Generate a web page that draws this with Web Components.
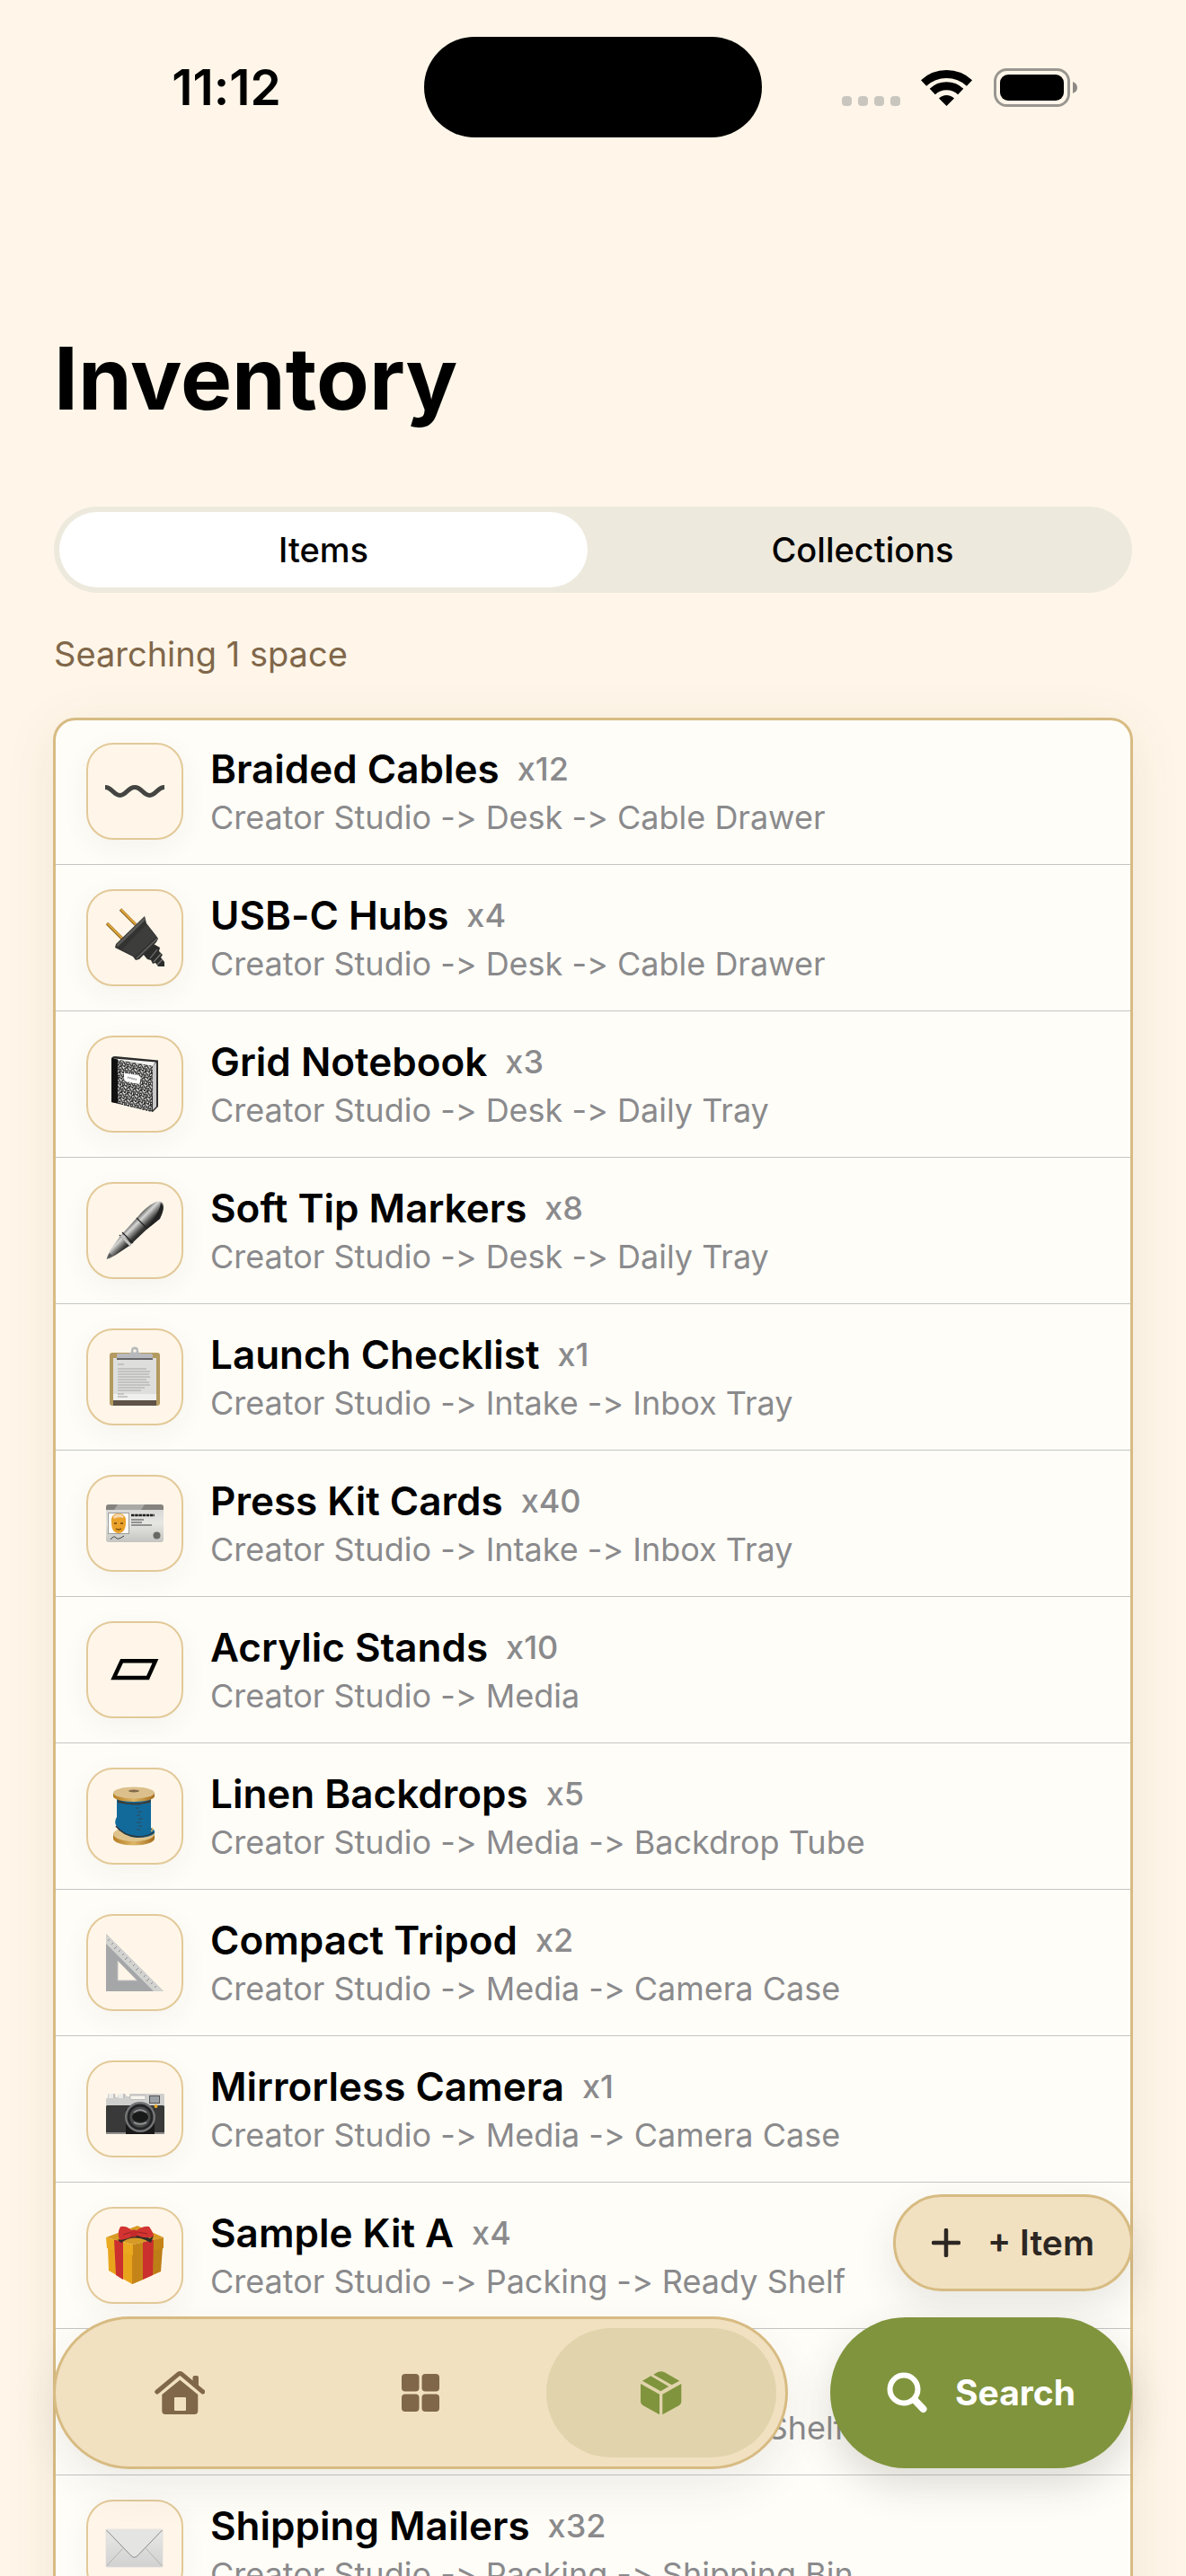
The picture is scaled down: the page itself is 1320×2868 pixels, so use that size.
<!DOCTYPE html>
<html lang="en">
<head>
<meta charset="utf-8">
<meta name="viewport" content="width=device-width, initial-scale=1">
<title>Inventory</title>
<style>
  :root {
    --bg: #fff6e9;
    --card: #fffdf8;
    --line: #d7bb82;
    --sand: #f1e1c1;
    --brown: #80674a;
    --green: #80943d;
    --muted: #8a8a8c;
    --hairline: #c5c5c3;
  }
  html, body { height: 100%; margin: 0; }
  body {
    overflow: hidden;
    background: var(--bg);
    color: #000;
    font-family: Inter, "Liberation Sans", sans-serif;
    font-variant-ligatures: no-contextual;
    font-feature-settings: "calt" 0;
  }
</style>
</head>
<body>
<inventory-app></inventory-app>

<script>
const define = (name, html, setup) => {
  const template = document.createElement('template');
  template.innerHTML = html;
  customElements.define(name, class extends HTMLElement {
    connectedCallback() {
      if (this.shadowRoot) return;
      this.attachShadow({ mode: 'open' }).append(template.content.cloneNode(true));
      if (setup) setup(this, this.shadowRoot);
    }
  });
};

/* ---------- item pictures, all on a 66 x 66 grid ---------- */
const ART = {
  wave: `<path d="M0 28.5C8 28.5 9 37.5 16.5 37.5S25 28.5 33 28.5S42 37.5 49.5 37.5S58 28.5 66 28.5" fill="none" stroke="#444542" stroke-width="5"/>`,
  plug: `<path d="M17 1.500L34 18.500M2 17L19 34" stroke="#8a6420" stroke-width="3.400"/>
    <path d="M17.500 1.500L34 18M2.500 17L19 33.500" stroke="#e3a93a" stroke-width="1.800"/>
    <path d="M54 40L61 44L60 48L64 52L62 55L66 60L66 65L59 65L56 61L53 62L51 58L47 57L42 51Z" fill="#2c2c2b"/>
    <path d="M50 56L58 46M54 60L62 51M58 63L64 57" stroke="#77777a" stroke-width="1.200"/>
    <path d="M44 9L46 17L57 31L59 34L57 38L38 57L34 58L31 54L17 47L11 44L12 40Z" fill="#333332"/>
    <path d="M44 10L12.500 41L14 43L45 13Z" fill="#5a5a58"/>
    <path d="M46 18L57 32L33 54L19 46Z" fill="#3d3d3b"/>
    <path d="M58 34L35 56" stroke="#686866" stroke-width="1.200"/>`,
  notebook: `<defs><pattern id="sp" width="7" height="7" patternUnits="userSpaceOnUse" patternTransform="rotate(13)"><rect width="7" height="7" fill="#2d2d2d"/><path d="M0 1h2v1h1v1h-2zM4 0h1v2h-1zM5 3h2v1h-1v1h-1zM1 5h1v1h1v1h-2zM3 4h1v1h-1zM6 6h1v1h-1zM2 3h1v1h-1zM3 2h1v1h-1zM4 6h1v1h-1zM0 4h1v1h-1z" fill="#e6e6e4"/></pattern></defs>
    <path d="M7 4Q8 2 11 2L59 6.500V58L53 64L7 53Z" fill="#2b2b2b"/>
    <path d="M10 4.500L56 8.500L53 13L10 5.500Z" fill="#f2f2f0"/>
    <path d="M53 13L57 8.500V58L53 62Z" fill="#c9c9ca"/>
    <path d="M13 5.500L53 13L52 64L13 54.500Z" fill="url(#sp)"/>
    <path d="M7 4L14 5.500V54.500L7 53Z" fill="#111"/>
    <path d="M21 20.500L37 23Q39 24 39 26V31Q38 33 36 32.500L23 30Q21 29 21 27Z" fill="#fff"/>
    <path d="M25 25.500L35 28" stroke="#999" stroke-width="2" stroke-dasharray="1.500 .7"/>`,
  pen: `<defs><linearGradient id="pg" gradientUnits="userSpaceOnUse" x1="24" y1="28" x2="38" y2="42"><stop offset="0" stop-color="#4a4a49"/><stop offset=".3" stop-color="#d9d9d8"/><stop offset=".5" stop-color="#8c8c8b"/><stop offset=".75" stop-color="#363635"/><stop offset="1" stop-color="#222"/></linearGradient></defs>
    <path d="M1.500 65L3 60L6 54L17 39L37 17C46 6 56 0 61 .5C67 2 66 10 61 20L46 32L27 50L12 60L5 64Z" fill="url(#pg)"/>
    <path d="M62 2C66 6 64 13 60 19C56 24 52 27 46 31C52 23 61 12 62 2Z" fill="#222"/>
    <path d="M16 38L28 50M19 35L31 47M35 19L47 31" stroke="#222" stroke-width="1.200"/>
    <path d="M17.500 38.500L28.500 49.500" stroke="#c4c4c3" stroke-width="3"/>
    <path d="M2 64L5 58L8 61Z" fill="#555"/>`,
  clipboard: `<rect x="5" y="6" width="56" height="59" rx="3" fill="#b39a60"/>
    <rect x="9" y="59" width="48" height="6" fill="#5f5347"/>
    <rect x="9" y="12" width="48" height="47" fill="#dededc"/>
    <path d="M9 52H57V59H9Z" fill="#efefed"/>
    <path d="M14 19H21M14 24H46M14 27H50M14 30H49M14 33H50M14 36H46M14 39H49M14 42H50M14 45H44M14 48H40M14 52H21M14 55H25" stroke="#b9b9b8" stroke-width="1.300"/>
    <path d="M13 8Q13 7 15 7H26Q29 6 29 3.500A4 4 0 0 1 37 3.500Q37 6 40 7H51Q53 7 53 9V14H13Z" fill="#b8b9bc"/>
    <path d="M13 12H53V14H13Z" fill="#66666a"/><circle cx="33" cy="4" r="1.800" fill="#fff6e9"/>`,
  idcard: `<defs><linearGradient id="ig" x2="0" y2="1"><stop offset="0" stop-color="#d3d3d1"/><stop offset=".5" stop-color="#e6e6e3"/><stop offset="1" stop-color="#c4c4c1"/></linearGradient></defs>
    <rect x="1" y="12" width="64" height="42" rx="3" fill="url(#ig)"/>
    <path d="M1 18V15Q1 12 4 12H62Q65 12 65 15V18Z" fill="#85837f"/><path d="M14 12H44L40 18H10Z" fill="#aaa9a6"/>
    <rect x="3.500" y="21.500" width="23" height="23" fill="#fff" stroke="#9b9b98"/>
    <path d="M7 32C6 25 10 22 15 22S24 25 23 32C23 40 20 44 15 44S7 40 7 32Z" fill="#eaa22b"/>
    <path d="M9 25Q15 20 21 25L20 27Q15 25 10 28Z" fill="#f5d6ae"/>
    <path d="M10 33H13M17 33H20M12 39Q15 41 18 39" stroke="#6d430e" stroke-width="1.500" fill="none"/>
    <path d="M29 24H55" stroke="#1f1f1f" stroke-width="2.600" stroke-dasharray="3.500 .7"/>
    <path d="M29 29H43M29 32H41M29 35H52" stroke="#777" stroke-width="1.300"/>
    <path d="M6 51Q10 46 12 49T21 47" fill="none" stroke="#444" stroke-width="1"/><circle cx="57.500" cy="46.500" r="4" fill="#686865"/>`,
  stand: `<path d="M18.500 23.200H56L47.500 42H9.700Z" fill="none" stroke="#000" stroke-width="4.400"/>`,
  spool: `<defs><linearGradient id="wd"><stop offset="0" stop-color="#b67c22"/><stop offset=".5" stop-color="#ddb667"/><stop offset="1" stop-color="#a66c1b"/></linearGradient></defs>
    <path d="M9 52V58C9 62 19 65.500 32 65.500S55 62 55 58V52Z" fill="url(#wd)"/><ellipse cx="32" cy="53" rx="23" ry="8" fill="#dfc38c"/>
    <path d="M13 13H51V46Q56 48 55 52Q51 57 35 57Q20 56 12 43Q10 38 13 34Z" fill="#126a9b"/>
    <path d="M12 44Q20 55 37 56Q47 56 54 51" fill="none" stroke="#303437" stroke-width="1.400"/>
    <path d="M51 50Q54 48 52 46" fill="none" stroke="#e3b35c" stroke-width="1.500"/>
    <path d="M29 20H40M34 24H38M36 28H41M35 32H39M37 36H42M35 40H40M37 44H41M35 48H39" stroke="#314b59" stroke-width="1"/>
    <path d="M14 15Q32 22 51 15L50 18Q32 22 14 18Z" fill="#3d3a34"/>
    <path d="M9 7V11C9 14 19 17 32 17S55 14 55 11V7Z" fill="url(#wd)"/><ellipse cx="32" cy="7" rx="23" ry="6.500" fill="#dcc08c"/><ellipse cx="32" cy="5" rx="6" ry="1.400" fill="#816a49"/>`,
  triangle: `<path d="M1 1V65H65ZM14 31L35.500 53H14Z" fill="#a5a6a8" fill-rule="evenodd"/>
    <path d="M1 1L65 65H54L1 12Z" fill="#d2d3d0"/>
    <path d="M5 7l-2 2M9 11l-2 2M13 15l-3 3M17 19l-2 2M21 23l-2 2M25 27l-3 3M29 31l-2 2M33 35l-2 2M37 39l-3 3M41 43l-2 2M45 47l-2 2M49 51l-3 3M53 55l-2 2M57 59l-2 2" stroke="#8d8e8f" stroke-width="1"/>
    <path d="M14 31V53H35.500" fill="none" stroke="#bebfc0"/>`,
  camera: `<path d="M3 17Q3 16 4 16H11L12 20H14L15 16H22L24 19H27V16H65Q66 16 66 18V30H1V22L3 20Z" fill="#cfcfcd"/>
    <path d="M4 16H11V21H4ZM15 16H22V21H15Z" fill="#ecebe9"/><path d="M10 16V21M21 16V21" stroke="#999"/>
    <rect x="28" y="18" width="17" height="4.500" rx="1" fill="#f8f5ed" stroke="#aaa" stroke-width=".7"/>
    <rect x="1" y="29" width="65" height="32" rx="1.500" fill="#383938"/><path d="M1 59H66V61H1Z" fill="#8f8f8e"/>
    <path d="M23 33H55V61H23Z" fill="#191919"/>
    <rect x="49.500" y="18.500" width="11" height="8" fill="#9aa0a3" stroke="#555"/>
    <circle cx="39" cy="42" r="17" fill="#747576"/><circle cx="39" cy="42" r="14.500" fill="#242526"/><circle cx="39" cy="42" r="11.500" fill="#4a4c4c"/>
    <ellipse cx="39" cy="42" rx="9" ry="6" fill="#181919"/><path d="M32 37Q39 31 46 37M32 48Q39 52 46 48" stroke="#999b9b" stroke-width="1.500" fill="none"/><circle cx="56.500" cy="30" r="2" fill="#e9a726"/>`,
  gift: `<path d="M3 24L30 32V65L4 50Z" fill="#e8a51c"/><path d="M30 32L64 24L62 51L30 65Z" fill="#bd7d17"/>
    <path d="M30 32V65L42 60V30Z" fill="#c58417"/>
    <path d="M1 13L36 0L65 13L31 21Z" fill="#d79a25"/>
    <path d="M1 13L31 21V33L2 25Z" fill="#eaa91f"/><path d="M31 21L65 13V25L31 33Z" fill="#c58417"/>
    <path d="M10 15.500L20 18V60L12 55ZM42 18.500L54 15.500L53 55L42 60Z" fill="#cb2f2e"/>
    <path d="M14 16Q30 5 50 14L54 11L51 19L45 16Q30 10 18 19Z" fill="#302d28"/>
    <path d="M17 1Q25 0 30 6H34Q42 0 49 1Q54 8 54 12Q45 15 36 11L31 12Q24 15 16 16Q13 8 17 1Z" fill="#d33331"/>
    <path d="M20 10L29 7M36 7L47 9" stroke="#962426" stroke-width="1"/><circle cx="32" cy="8.500" r="4" fill="#c32a2b"/>`,
  envelope: `<defs><linearGradient id="eg" x2="0" y2="1"><stop offset="0" stop-color="#e9e9e7"/><stop offset="1" stop-color="#d0d1d0"/></linearGradient></defs>
    <rect x="1" y="12" width="63" height="42" rx="1" fill="url(#eg)" stroke="#dededc" stroke-width=".8"/>
    <path d="M1.500 53L19.500 33.500M63.500 53L45.500 33.500" stroke="#b3b3b2" stroke-width="1"/>
    <path d="M1 12L28 40.500Q32.500 46 37 40.500L64 12Z" fill="#e4e4e2"/>
    <path d="M1.500 13L28 40.500Q32.500 46 37 40.500L63.500 13" fill="none" stroke="#8b8b8a" stroke-width="1"/>`
};

const ITEMS = [
  ['wave', 'Braided Cables', 12, 'Desk -> Cable Drawer'],
  ['plug', 'USB-C Hubs', 4, 'Desk -> Cable Drawer'],
  ['notebook', 'Grid Notebook', 3, 'Desk -> Daily Tray'],
  ['pen', 'Soft Tip Markers', 8, 'Desk -> Daily Tray'],
  ['clipboard', 'Launch Checklist', 1, 'Intake -> Inbox Tray'],
  ['idcard', 'Press Kit Cards', 40, 'Intake -> Inbox Tray'],
  ['stand', 'Acrylic Stands', 10, 'Media'],
  ['spool', 'Linen Backdrops', 5, 'Media -> Backdrop Tube'],
  ['triangle', 'Compact Tripod', 2, 'Media -> Camera Case'],
  ['camera', 'Mirrorless Camera', 1, 'Media -> Camera Case'],
  ['gift', 'Sample Kit A', 4, 'Packing -> Ready Shelf'],
  ['gift', 'Sample Kit B', 4, 'Packing -> Ready Shelf'],
  ['envelope', 'Shipping Mailers', 32, 'Packing -> Shipping Bin']
];

define('status-bar', `
  <style>
    :host { display: grid; grid-template-columns: 1fr 376px 1fr; align-items: center; padding-top: 41px; }
    .time { text-align: center; font-size: 55px; line-height: 64px; font-weight: 600; padding-left: 32px; }
    .island { height: 112px; border-radius: 56px; background: #000; }
    .signals { display: flex; justify-content: center; align-items: flex-end; padding-right: 32px; }
    svg { display: block; }
    .wifi { margin: 0 23px 0 22px; }
  </style>
  <div class="time">11:12</div>
  <div class="island"></div>
  <div class="signals">
    <svg width="66" height="43" viewBox="0 0 66 43" fill="#c9c6bf"><rect y="31" width="11" height="11" rx="4"/><rect x="18" y="31" width="11" height="11" rx="4"/><rect x="36" y="31" width="11" height="11" rx="4"/><rect x="54" y="31" width="11" height="11" rx="4"/></svg>
    <svg class="wifi" width="58" height="43" viewBox="0 0 58 43"><path d="M3 16.500A37.500 37.500 0 0 1 54 16.500M12.800 26A23 23 0 0 1 44.200 26" fill="none" stroke="#000" stroke-width="9"/><path d="M28.500 42L20 33.500A12 12 0 0 1 37 33.500Z"/></svg>
    <svg width="94" height="43" viewBox="0 0 94 43"><rect x="1.500" y="1.500" width="82" height="40" rx="13" fill="none" stroke="#999690" stroke-width="3"/><rect x="7" y="7" width="71" height="29" rx="9"/><path d="M88 15Q93 17 93 21.500T88 28Z" fill="#8d8a84"/></svg>
  </div>`);

define('segment-control', `
  <style>
    :host { display: flex; gap: 12px; box-sizing: border-box; height: 96px; padding: 6px; border-radius: 48px; background: #ede9dd; }
    ::slotted(button) {
      flex: 1; margin: 0; padding: 0; border: 0; border-radius: 42px; background: none;
      font: 500 38px/48px Inter, sans-serif; color: #000;
    }
    ::slotted(button[aria-selected="true"]) { background: #fff; }
  </style>
  <slot></slot>`, el => el.setAttribute('role', 'tablist'));

define('item-row', `
  <style>
    :host { display: flex; align-items: center; gap: 30px; height: 162px; padding-left: 36px; border-bottom: 1px solid var(--hairline); }
    .tile {
      display: grid; place-items: center; box-sizing: border-box; flex: none;
      width: 108px; height: 108px; border: 2px solid #e2c998; border-radius: 30px;
      background: var(--bg); box-shadow: 0 8px 30px rgba(60, 60, 50, .05);
    }
    svg { display: block; width: 66px; height: 66px; overflow: visible; }
    .text { display: flex; flex-direction: column; gap: 2px; white-space: nowrap; }
    .head { display: flex; align-items: center; gap: 20px; }
    .name { font-size: 44px; line-height: 56px; font-weight: 600; }
    .count, .path { font-size: 36px; line-height: 48px; color: var(--muted); }
    .count { font-weight: 500; }
  </style>
  <div class="tile"></div>
  <div class="text">
    <div class="head"><span class="name"><slot name="name"></slot></span><span class="count"><slot name="count"></slot></span></div>
    <div class="path"><slot name="path"></slot></div>
  </div>`, (el, root) => {
    el.setAttribute('role', 'listitem');
    root.querySelector('.tile').innerHTML = `<svg viewBox="0 0 66 66" aria-hidden="true">${ART[el.getAttribute('art')]}</svg>`;
  });

define('item-list', `
  <style>
    :host {
      display: block; background: var(--card); border-radius: 24px;
      outline: 3px solid var(--line); outline-offset: -2px;
      box-shadow: 0 12px 60px rgba(90, 70, 30, .09);
    }
  </style>
  <slot></slot>`, el => {
    el.setAttribute('role', 'list');
    for (const [art, name, count, path] of ITEMS) {
      const row = document.createElement('item-row');
      row.setAttribute('art', art);
      const parts = { name, count: 'x' + count, path: 'Creator Studio -> ' + path };
      for (const key in parts) {
        const span = document.createElement('span');
        span.slot = key;
        span.textContent = parts[key];
        row.append(span);
      }
      el.append(row);
    }
  });

define('tab-dock', `
  <style>
    :host { display: block; flex: 1; }
    nav {
      display: flex; gap: 12px; box-sizing: border-box; height: 168px; padding: 12px;
      border-radius: 84px; background: var(--sand);
      outline: 3px solid var(--line); outline-offset: -2px;
      box-shadow: 0 20px 50px rgba(60, 60, 50, .09);
    }
    a { flex: 1; display: grid; place-items: center; border-radius: 72px; color: var(--brown); }
    a[aria-current] { background: #e1d4ac; color: var(--green); }
    svg { display: block; fill: currentColor; }
  </style>
  <nav>
    <a href="#home" aria-label="Home"><svg width="56" height="50" viewBox="0 0 56 50"><path d="M42.500 15V8Q42.500 6 44.500 6H47Q49 6 49 8V20Z"/><path d="M2.800 24L26.500 4.200Q28.300 3 30.100 4.200L53.800 24" fill="none" stroke="currentColor" stroke-width="5" stroke-linecap="round"/><path fill-rule="evenodd" d="M8.300 27L28.300 10.700L48.300 27V45Q48.300 49 44.500 49H12Q8.300 49 8.300 45ZM23 30Q22 30 22 31V44Q22 45 23 45H34Q35 45 35 44V31Q35 30 34 30Z"/></svg></a>
    <a href="#spaces" aria-label="Spaces"><svg width="42" height="42" viewBox="0 0 42 42"><rect width="19.500" height="19.500" rx="4"/><rect x="22.500" width="19.500" height="19.500" rx="4"/><rect y="22.500" width="19.500" height="19.500" rx="4"/><rect x="22.500" y="22.500" width="19.500" height="19.500" rx="4"/></svg></a>
    <a href="#inventory" aria-label="Inventory" aria-current="page"><svg width="46" height="49" viewBox="0 0 46 49"><path d="M0 14L21 25.700V48.300L2.500 38Q0 36.500 0 34ZM24.300 25.700L45.300 14V34Q45.300 36.500 43 38L24.300 48.300ZM2 10.700L11.300 5.300L31.300 17L22.300 22.300ZM14.300 3.700L19 1Q22.700 -.7 26.300 1L43.300 10.700L34.700 15.300Z"/></svg></a>
  </nav>`);

define('pill-button', `
  <style>
    :host { display: block; }
    button {
      display: flex; align-items: center; justify-content: center; box-sizing: border-box;
      height: 106px; gap: 30px; padding: 0 42px; margin: 0; border: 0; border-radius: 53px;
      background: var(--sand); color: #2d2723;
      outline: 3px solid var(--line); outline-offset: -2px;
      font: 600 39px/48px Inter, sans-serif;
      box-shadow: 0 16px 44px rgba(60, 60, 50, .12);
    }
    :host([primary]) button {
      width: 336px; height: 168px; border-radius: 84px; background: var(--green); color: #fff; outline: 0;
      font-weight: 700; box-shadow: 0 18px 44px rgba(60, 60, 50, .18);
    }
    ::slotted(svg) { display: block; }
  </style>
  <button type="button"><slot name="icon"></slot><span><slot></slot></span></button>`);

define('inventory-app', `
  <style>
    :host { display: block; position: relative; height: 100vh; overflow: hidden; }
    main { display: flex; flex-direction: column; padding: 0 60px; margin-top: 208px; }
    h1 { margin: 0 0 83px; font-size: 96px; line-height: 120px; font-weight: 700; }
    p { margin: 44px 0 48px; font-size: 38px; line-height: 48px; color: var(--brown); }
    .dock { position: absolute; left: 60px; right: 60px; bottom: 120px; display: flex; flex-direction: column; align-items: flex-end; gap: 30px; }
    .bar { display: flex; align-self: stretch; gap: 48px; }
  </style>
  <status-bar></status-bar>
  <main>
    <h1>Inventory</h1>
    <segment-control aria-label="View">
      <button type="button" role="tab" aria-selected="true">Items</button>
      <button type="button" role="tab" aria-selected="false">Collections</button>
    </segment-control>
    <p>Searching 1 space</p>
    <item-list></item-list>
  </main>
  <div class="dock">
    <pill-button><svg slot="icon" width="32" height="32" viewBox="0 0 32 32" aria-hidden="true"><path d="M16 2V30M2 16H30" stroke="currentColor" stroke-width="4.500" stroke-linecap="round"/></svg>+ Item</pill-button>
    <div class="bar">
      <tab-dock></tab-dock>
      <pill-button primary><svg slot="icon" width="46" height="46" viewBox="0 0 46 46" fill="none" stroke="currentColor" aria-hidden="true"><circle cx="19" cy="19" r="15.500" stroke-width="6"/><path d="M31 31L40.500 41" stroke-width="8" stroke-linecap="round"/></svg>Search</pill-button>
    </div>
  </div>`);
</script>
</body>
</html>
